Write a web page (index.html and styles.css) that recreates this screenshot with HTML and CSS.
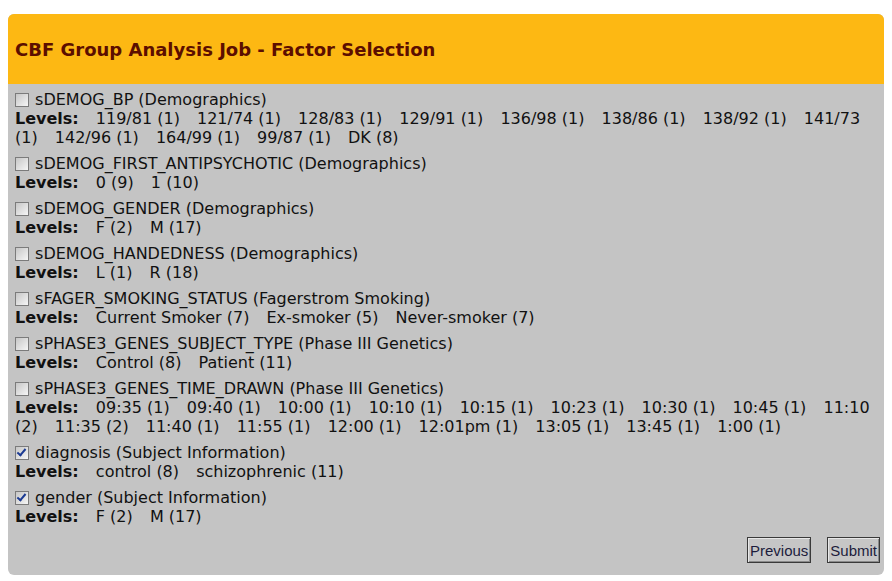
FILE: index.html
```html
<!DOCTYPE html>
<html lang="en">
<head>
  <meta charset="UTF-8" />
  <title>CBF Group Analysis Job - Factor Selection</title>
  <link rel="stylesheet" href="styles.css">
</head>
<body>
  <div class="panel">
    <div class="panel-header">
      <h1>CBF Group Analysis Job - Factor Selection</h1>
    </div>

    <form class="panel-body">
      <div class="factor">
        <label><input type="checkbox" name="factor" value="sDEMOG_BP" /> sDEMOG_BP (Demographics)</label>
        <div class="levels"><b>Levels:</b> <span>119/81 (1)</span> <span>121/74 (1)</span> <span>128/83 (1)</span> <span>129/91 (1)</span> <span>136/98 (1)</span> <span>138/86 (1)</span> <span>138/92 (1)</span> <span>141/73 (1)</span> <span>142/96 (1)</span> <span>164/99 (1)</span> <span>99/87 (1)</span> <span>DK (8)</span></div>
      </div>

      <div class="factor">
        <label><input type="checkbox" name="factor" value="sDEMOG_FIRST_ANTIPSYCHOTIC" /> sDEMOG_FIRST_ANTIPSYCHOTIC (Demographics)</label>
        <div class="levels"><b>Levels:</b> <span>0 (9)</span> <span>1 (10)</span></div>
      </div>

      <div class="factor">
        <label><input type="checkbox" name="factor" value="sDEMOG_GENDER" /> sDEMOG_GENDER (Demographics)</label>
        <div class="levels"><b>Levels:</b> <span>F (2)</span> <span>M (17)</span></div>
      </div>

      <div class="factor">
        <label><input type="checkbox" name="factor" value="sDEMOG_HANDEDNESS" /> sDEMOG_HANDEDNESS (Demographics)</label>
        <div class="levels"><b>Levels:</b> <span>L (1)</span> <span>R (18)</span></div>
      </div>

      <div class="factor">
        <label><input type="checkbox" name="factor" value="sFAGER_SMOKING_STATUS" /> sFAGER_SMOKING_STATUS (Fagerstrom Smoking)</label>
        <div class="levels"><b>Levels:</b> <span>Current Smoker (7)</span> <span>Ex-smoker (5)</span> <span>Never-smoker (7)</span></div>
      </div>

      <div class="factor">
        <label><input type="checkbox" name="factor" value="sPHASE3_GENES_SUBJECT_TYPE" /> sPHASE3_GENES_SUBJECT_TYPE (Phase III Genetics)</label>
        <div class="levels"><b>Levels:</b> <span>Control (8)</span> <span>Patient (11)</span></div>
      </div>

      <div class="factor">
        <label><input type="checkbox" name="factor" value="sPHASE3_GENES_TIME_DRAWN" /> sPHASE3_GENES_TIME_DRAWN (Phase III Genetics)</label>
        <div class="levels"><b>Levels:</b> <span>09:35 (1)</span> <span>09:40 (1)</span> <span>10:00 (1)</span> <span>10:10 (1)</span> <span>10:15 (1)</span> <span>10:23 (1)</span> <span>10:30 (1)</span> <span>10:45 (1)</span> <span>11:10 (2)</span> <span>11:35 (2)</span> <span>11:40 (1)</span> <span>11:55 (1)</span> <span>12:00 (1)</span> <span>12:01pm (1)</span> <span>13:05 (1)</span> <span>13:45 (1)</span> <span>1:00 (1)</span></div>
      </div>

      <div class="factor">
        <label><input type="checkbox" name="factor" value="diagnosis" checked /> diagnosis (Subject Information)</label>
        <div class="levels"><b>Levels:</b> <span>control (8)</span> <span>schizophrenic (11)</span></div>
      </div>

      <div class="factor">
        <label><input type="checkbox" name="factor" value="gender" checked /> gender (Subject Information)</label>
        <div class="levels"><b>Levels:</b> <span>F (2)</span> <span>M (17)</span></div>
      </div>

      <div class="actions">
        <button type="button">Previous</button>
        <button type="submit">Submit</button>
      </div>
    </form>
  </div>
</body>
</html>
```

FILE: styles.css
```css
body {
  margin: 14px 8px 6px;
  background: #fff;
  font-family: "DejaVu Sans", Verdana, sans-serif;
  font-size: 16px;
  color: #111;
}

.panel {
  height: 561px;
  display: flex;
  flex-direction: column;
  background: #c4c4c4;
  border-radius: 6px;
  overflow: hidden;
}

.panel-header {
  height: 70px;
  display: flex;
  align-items: center;
  padding: 0 7px;
  background: #fdb813;
}

.panel-header h1 {
  margin: 0;
  font-size: 18px;
  font-weight: bold;
  color: #5c0e00;
}

.panel-body {
  flex: 1;
  display: flex;
  flex-direction: column;
  padding: 6px 5px 12px 7px;
}

.factor { margin-bottom: 7px; line-height: 19px; }

.factor label { display: block; }

.factor input {
  appearance: none;
  -webkit-appearance: none;
  box-sizing: border-box;
  width: 14px;
  height: 14px;
  margin: 0 1px 0 0;
  vertical-align: -2px;
  border: 1px solid #7b7b7b;
  background: linear-gradient(135deg, #c6c6c6, #f6f6f6);
  position: relative;
}

.factor input:checked::after {
  content: "";
  position: absolute;
  left: 3px;
  top: 0;
  width: 3px;
  height: 7px;
  border: solid #1b3a93;
  border-width: 0 2px 2px 0;
  transform: rotate(40deg);
}

.levels b { font-weight: bold; }
.levels span { margin-left: 12px; }

.actions {
  margin-top: auto;
  display: flex;
  justify-content: flex-end;
  gap: 16px;
}

.actions button {
  height: 26px;
  padding: 0 2px;
  font-family: "Liberation Sans", Arial, sans-serif;
  font-size: 15px;
  color: #1c1c3c;
  background: #c6c6c6;
  border: 1px solid #3a3a3a;
  box-shadow: inset 1px 1px 0 #e8e8e8, inset -1px -1px 0 #8a8a8a;
  cursor: pointer;
}

.actions button:last-child { margin-right: -1px; }
```
